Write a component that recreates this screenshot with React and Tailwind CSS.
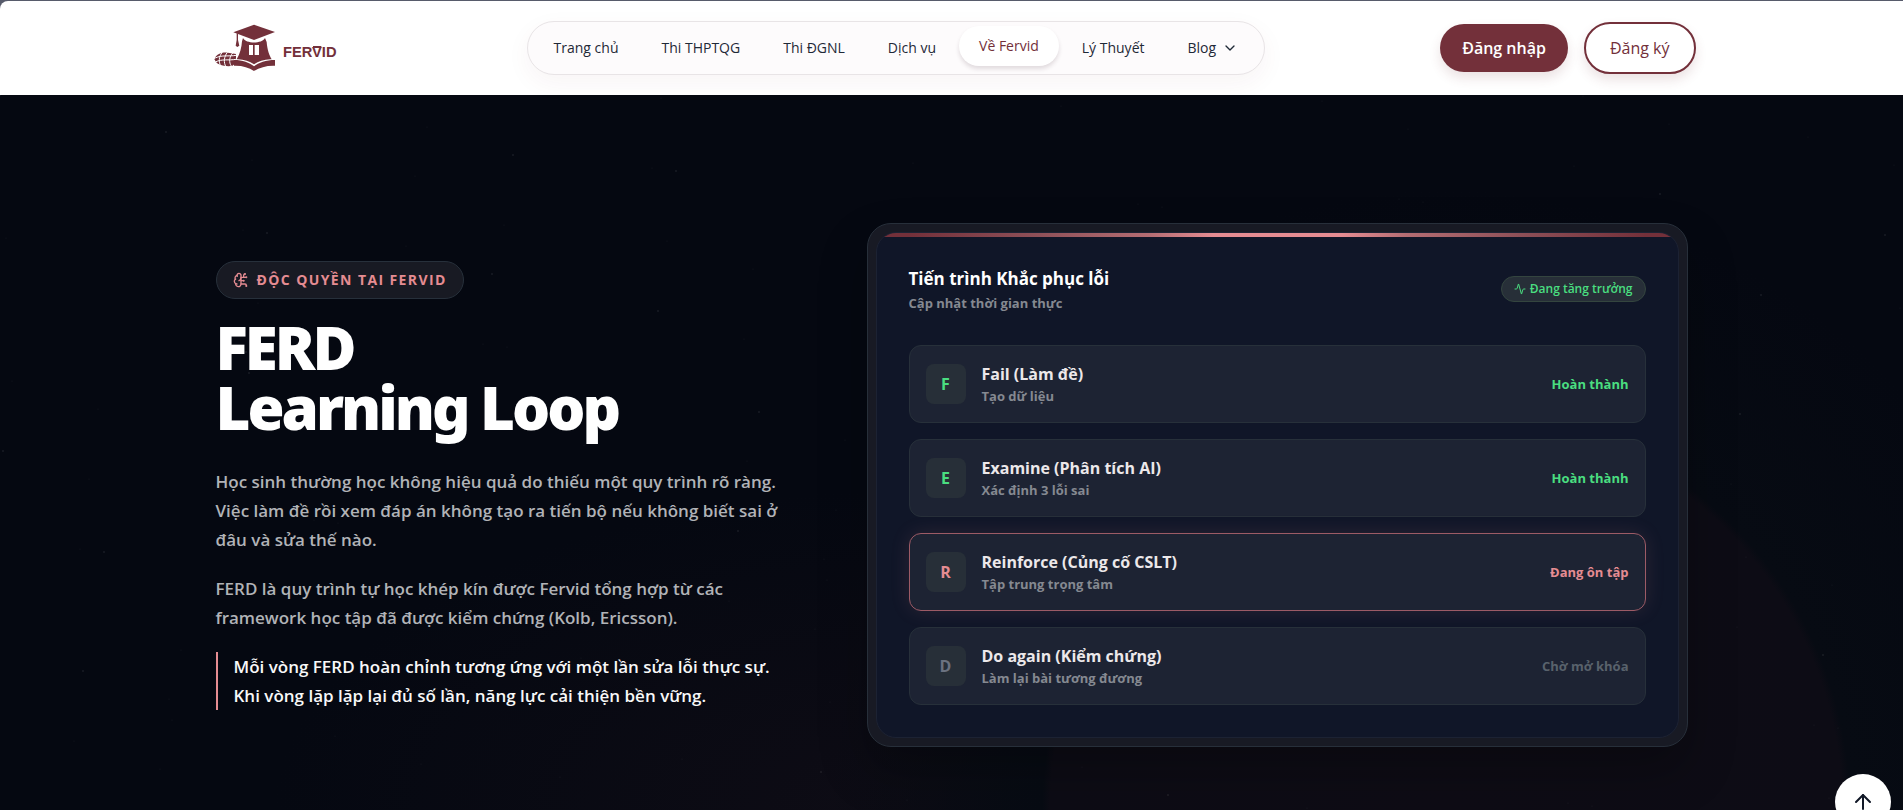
import React from 'react'
import { Activity, ArrowUp, BrainCircuit, ChevronDown } from 'lucide-react'

const navItems = [
  { label: 'Trang chủ' },
  { label: 'Thi THPTQG' },
  { label: 'Thi ĐGNL' },
  { label: 'Dịch vụ' },
  { label: 'Về Fervid', active: true },
  { label: 'Lý Thuyết' },
  { label: 'Blog', hasMenu: true }
]

const steps = [
  { letter: 'F', title: 'Fail (Làm đề)', note: 'Tạo dữ liệu', status: 'Hoàn thành', state: 'done' },
  { letter: 'E', title: 'Examine (Phân tích AI)', note: 'Xác định 3 lỗi sai', status: 'Hoàn thành', state: 'done' },
  { letter: 'R', title: 'Reinforce (Củng cố CSLT)', note: 'Tập trung trọng tâm', status: 'Đang ôn tập', state: 'current' },
  { letter: 'D', title: 'Do again (Kiểm chứng)', note: 'Làm lại bài tương đương', status: 'Chờ mở khóa', state: 'locked' }
]

const letterColors = {
  done: 'text-[#4ade80]',
  current: 'text-[#e58c92]',
  locked: 'text-[#6b7280]'
}

const statusColors = {
  done: 'text-[#4ade80]',
  current: 'text-[#e58c92]',
  locked: 'text-[#59626c]'
}

// Faint dust scattered over the hero background
const dust = Array.from({ length: 150 }, (_, i) => ({
  x: (i * 733 + (i % 7) * 91) % 1903,
  y: (i * 397 + (i % 5) * 67) % 780,
  r: i % 4 === 0 ? 1 : 0.6
}))

const Logo = () => (
  <svg viewBox="22 36 432 156" className="w-36 h-13" role="img" aria-label="Fervid">
    <g fill="#73303a">
      <path d="M98 67 L160 44 L223 66 L160 90 Z" />
      <path d="M127 84 C136 102 184 102 193 84 L198 96 C200 120 206 136 213 148 C192 147 174 154 160 163 C146 154 128 147 108 148 C118 132 123 112 124 94 Z" />
      <path d="M100 150 C126 150 146 158 160 169 C174 158 196 150 223 150 L223 167 C198 166 178 172 160 183 C144 172 124 166 100 167 Z" />
      <path d="M108 70 H112 V90 L116 107 L110 111 L105 107 L108 90 Z" />
      <path d="M42 148 C46 132 62 126 82 128 L106 132 V160 L94 168 C72 170 46 166 42 148 Z" />
    </g>
    <path d="M145 105 H157 V135 H145 Z M162 105 H175 V135 H162 Z" fill="#fff" />
    <g stroke="#fff" strokeWidth="3" fill="none">
      <path d="M44 144 C64 134 84 140 106 136 M44 156 C64 146 84 152 106 148" />
      <path d="M64 128 C54 140 54 156 60 168 M80 127 C70 140 68 158 76 170 M96 129 C86 140 84 158 92 168" />
    </g>
    <text x="247" y="140" fill="#73303a" fontSize="44" fontWeight="700" fontFamily="Liberation Sans, sans-serif">FERVID</text>
    <path d="M337 111 H362" stroke="#73303a" strokeWidth="6" />
  </svg>
)

const Header = () => (
  <header className="relative z-10 bg-white rounded-tl-lg">
    <div className="max-w-screen-2xl mx-auto px-6 h-[94px] flex items-center justify-between">
      <a href="#home" className="block">
        <Logo />
      </a>

      <nav className="flex items-center gap-[3px] p-1.5 rounded-full border border-[#e8e4e6] bg-[#fdfbfc] shadow-[0_8px_24px_rgba(115,48,58,0.05)]">
        {navItems.map(item => (
          <a
            key={item.label}
            href="#nav"
            className={
              item.active
                ? 'h-10 px-5 flex items-center rounded-full text-sm font-medium text-[#73303a] bg-white -translate-y-0.5 shadow-[0_3px_4px_rgba(60,30,40,0.14)]'
                : 'h-10 px-5 flex items-center rounded-full text-sm font-medium text-[#1f2937]'
            }
          >
            {item.label}
            {item.hasMenu && <ChevronDown className="w-4 h-4 ml-1.5" />}
          </a>
        ))}
      </nav>

      <div className="flex items-center gap-4">
        <button className="h-12 px-[22px] rounded-full bg-[#73303a] text-white text-base font-semibold shadow-[0_6px_12px_rgba(115,48,58,0.14)]">
          Đăng nhập
        </button>
        <button className="h-13 px-6 rounded-full border-2 border-[#73303a] bg-white text-[#73303a] text-base font-medium shadow-[0_6px_12px_rgba(115,48,58,0.14)]">
          Đăng ký
        </button>
      </div>
    </div>
  </header>
)

const StepRow = ({ step }) => (
  <li
    className={
      step.state === 'current'
        ? 'flex items-center gap-4 p-4 rounded-xl border border-[#9d5b66] bg-[#1d2333] shadow-[0_0_20px_rgba(229,140,146,0.12)]'
        : 'flex items-center gap-4 p-4 rounded-xl border border-[#27303a] bg-[#1d2333]'
    }
  >
    <div className={`w-10 h-10 rounded-lg bg-[#272f38] flex items-center justify-center text-base font-bold ${letterColors[step.state]}`}>
      {step.letter}
    </div>
    <div className="flex-1">
      <h3 className="text-base leading-6 font-bold text-[#ece8ea]">{step.title}</h3>
      <p className="text-[13px] leading-5 font-bold text-[#858991]">{step.note}</p>
    </div>
    <span className={`text-[13px] leading-5 font-bold ${statusColors[step.state]}`}>{step.status}</span>
  </li>
)

const ProgressCard = () => (
  <div className="p-2 rounded-3xl border border-[#272f3a] bg-[#181a24] shadow-[0_24px_48px_rgba(0,0,0,0.25)]">
    <div className="rounded-[20px] border border-[#1c2233] bg-[#101628] overflow-hidden">
      <div className="h-1 bg-[linear-gradient(to_right,#73303a_4%,#8e5058_20%,#b56d73_34%,#e58c92_42%,#e58c92_58%,#b56d73_66%,#8e5058_80%,#73303a_96%)]" />
      <div className="px-8 pt-7 pb-8">
        <div className="flex items-center justify-between mb-8">
          <div>
            <h2 className="text-[17px] leading-7 font-bold text-white">Tiến trình Khắc phục lỗi</h2>
            <p className="text-[13px] leading-5 font-bold text-[#858991]">Cập nhật thời gian thực</p>
          </div>
          <span className="flex items-center gap-1 px-3 py-1 rounded-full border border-[#34453f] bg-[#272f38] text-xs font-semibold text-[#4ade80]">
            <Activity className="w-3 h-3" />
            Đang tăng trưởng
          </span>
        </div>

        <ul className="flex flex-col gap-4">
          {steps.map(step => (
            <StepRow key={step.letter} step={step} />
          ))}
        </ul>
      </div>
    </div>
  </div>
)

const Hero = () => (
  <section className="relative flex-1 overflow-hidden bg-[#050811]">
    <div className="absolute inset-0 bg-[radial-gradient(ellipse_640px_320px_at_48%_100%,#0e0c15,transparent)]" />
    <div className="absolute inset-0 bg-[radial-gradient(circle_at_76%_100%,#0e0c15_0px,#0d0c15_396px,#070b13_404px,transparent_620px)]" />
    <svg className="absolute inset-0 w-full h-full" aria-hidden="true">
      {dust.map((dot, i) => (
        <circle key={i} cx={dot.x} cy={dot.y} r={dot.r} fill="#ffffff" opacity="0.08" />
      ))}
    </svg>

    <div className="relative max-w-screen-2xl mx-auto px-8 pt-32 pb-12 grid grid-cols-[571fr_821fr] gap-20 items-center">
      <div>
        <div className="w-fit flex items-center gap-2 px-4 py-2 mb-[18px] rounded-full border border-[#27303b] bg-[#181a23] text-[#e58c92]">
          <BrainCircuit className="w-4 h-4" />
          <span className="text-sm font-bold tracking-widest">ĐỘC QUYỀN TẠI FERVID</span>
        </div>
        <h1 className="font-['Noto_Sans',sans-serif] text-6xl leading-none font-black tracking-tighter text-white mb-[30px]">
          FERD
          <br />
          Learning Loop
        </h1>
        <div className="flex flex-col gap-5 text-[17px] leading-[29px] font-semibold text-[#b1b3b7]">
          <p>
            Học sinh thường học không hiệu quả do thiếu một quy trình rõ ràng. Việc làm đề rồi xem
            đáp án không tạo ra tiến bộ nếu không biết sai ở đâu và sửa thế nào.
          </p>
          <p>
            FERD là quy trình tự học khép kín được Fervid tổng hợp từ các framework học tập đã được
            kiểm chứng (Kolb, Ericsson).
          </p>
          <p className="pl-4 border-l-2 border-[#e58c92] text-[#f8f8f8]">
            Mỗi vòng FERD hoàn chỉnh tương ứng với một lần sửa lỗi thực sự.
            <br />
            Khi vòng lặp lặp lại đủ số lần, năng lực cải thiện bền vững.
          </p>
        </div>
      </div>

      <ProgressCard />
    </div>
  </section>
)

const App = () => {
  return (
    <main className="min-h-screen flex flex-col pt-px overflow-hidden bg-[#575b6b] font-['Open_Sans',sans-serif]">
      <Header />
      <Hero />
      <button
        aria-label="Lên đầu trang"
        className="fixed -bottom-5 right-3 z-20 w-14 h-14 rounded-full bg-white text-[#111827] flex items-center justify-center"
      >
        <ArrowUp className="w-6 h-6" />
      </button>
    </main>
  )
}

export default App
